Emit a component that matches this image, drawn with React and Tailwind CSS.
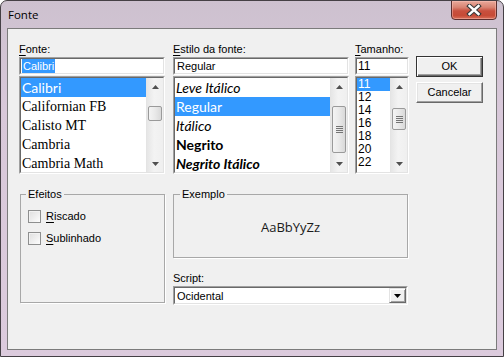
import React from 'react';

const ui = "font-['Liberation_Sans',Arial,sans-serif]";

const fonts = [
  { name: 'Calibri', cls: "font-['Lato',sans-serif] text-[14px]" },
  { name: 'Californian FB', cls: "font-['Liberation_Serif',serif] text-[14px]" },
  { name: 'Calisto MT', cls: "font-['Liberation_Serif',serif] text-[14px]" },
  { name: 'Cambria', cls: "font-['Liberation_Serif',serif] text-[14px]" },
  { name: 'Cambria Math', cls: "font-['Liberation_Serif',serif] text-[14px]" },
];

const styles = [
  { name: 'Leve Itálico', cls: 'italic font-normal' },
  { name: 'Regular', cls: 'font-normal' },
  { name: 'Itálico', cls: 'italic font-normal' },
  { name: 'Negrito', cls: 'font-bold' },
  { name: 'Negrito Itálico', cls: 'italic font-bold' },
];

const sizes = ['11', '12', '14', '16', '18', '20', '22'];

function Up() {
  return (
    <svg width="7" height="4" viewBox="0 0 7 4">
      <path d="M3.5 0 L7 4 L0 4 Z" fill="#505050" />
    </svg>
  );
}

function Down({ color = '#505050' }) {
  return (
    <svg width="7" height="4" viewBox="0 0 7 4">
      <path d="M0 0 L7 0 L3.5 4 Z" fill={color} />
    </svg>
  );
}

function ScrollBar({ thumb, grip }) {
  return (
    <div className="flex w-[17px] shrink-0 flex-col border-l border-[#e4e4e4] bg-[linear-gradient(to_right,#e6e6e6,#f3f3f3_45%,#efefef)]">
      <div className="flex h-[17px] shrink-0 items-center justify-center">
        <Up />
      </div>
      <div className="flex-1">
        <div
          className={`mx-[1px] flex flex-col items-center justify-center gap-[1px] rounded-[2px] border border-[#9a9a9a] bg-[linear-gradient(to_right,#f4f4f4,#e9e9e9_50%,#d9d9d9)] ${thumb}`}
        >
          {grip &&
            [0, 1, 2, 3].map((i) => (
              <div key={i} className="h-[1px] w-[7px] bg-[#747474]" />
            ))}
        </div>
      </div>
      <div className="flex h-[17px] shrink-0 items-center justify-center">
        <Down />
      </div>
    </div>
  );
}

function Sunken({ className, children }) {
  return (
    <div className={`border border-t-[#a0a0a0] border-l-[#a0a0a0] border-r-white border-b-white ${className}`}>
      <div className="h-full border border-t-[#696969] border-l-[#696969] border-r-[#e3e3e3] border-b-[#e3e3e3] bg-white">
        {children}
      </div>
    </div>
  );
}

function Label({ u, rest, className = '' }) {
  return (
    <div className={`h-[16px] leading-[16px] ${className}`}>
      <span className="underline underline-offset-[2px]">{u}</span>
      {rest}
    </div>
  );
}

function CheckRow({ u, rest }) {
  return (
    <div className="flex h-[13px] items-center">
      <div className="h-[13px] w-[13px] border border-[#8e8f8f] bg-[linear-gradient(135deg,#dedede,#fdfdfd)] shadow-[inset_1px_1px_0_#f2f2f2]" />
      <span className="ml-[5px] leading-[13px]">
        <span className="underline underline-offset-[2px]">{u}</span>
        {rest}
      </span>
    </div>
  );
}

export default function App() {
  return (
    <div
      className={`flex h-[357px] w-[504px] flex-col overflow-hidden rounded-t-[7px] border border-[#454045] bg-[linear-gradient(to_bottom,#cdc1cf,#d8c8d9_30%,#dccbdd)] ${ui}`}
    >
      {/* title bar */}
      <div className="flex h-[27px] shrink-0 items-start justify-between">
        <span className="ml-[7px] mt-[7px] font-['Open_Sans',sans-serif] text-[11.5px] leading-[14px] text-black">
          Fonte
        </span>
        <div className="-mt-[1px] mr-[6px] flex h-[20px] w-[46px] items-center justify-center rounded-b-[4px] border border-[#5b2f2f] bg-[linear-gradient(to_bottom,#e9a99b,#d98473_35%,#c8503e_55%,#c64a36_80%,#d8705a)] shadow-[inset_0_0_0_1px_rgba(255,200,190,0.45)]">
          <svg width="16" height="12" viewBox="0 0 16 12">
            <path d="M3.5 2 L12.5 10 M12.5 2 L3.5 10" stroke="#3a3a3a" strokeWidth="4.5" strokeLinecap="square" />
            <path d="M3.5 2 L12.5 10 M12.5 2 L3.5 10" stroke="#ffffff" strokeWidth="2.4" strokeLinecap="square" />
          </svg>
        </div>
      </div>

      {/* client area */}
      <div className="mx-[6px] h-[322px] border border-[#7b7b7b] bg-[#f0f0f0] pl-[11px] pt-[12px] text-[11px] text-black">
        <div className="flex">
          {/* Fonte */}
          <div className="w-[146px]">
            <Label u="F" rest="onte:" />
            <Sunken className="h-[18px]">
              <div className="flex h-full items-center pl-[1px]">
                <span className="bg-[#3399ff] px-[1px] leading-[14px] text-white">Calibri</span>
              </div>
            </Sunken>
            <Sunken className="mt-[1px] h-[98px]">
              <div className="flex h-full overflow-hidden">
                <div className="flex-1">
                  {fonts.map((f, i) => (
                    <div
                      key={f.name}
                      className={`h-[19px] pl-[1px] leading-[19px] whitespace-nowrap ${f.cls} ${i === 0 ? 'bg-[#3399ff] text-white' : 'text-black'}`}
                    >
                      {f.name}
                    </div>
                  ))}
                </div>
                <ScrollBar thumb="mt-[11px] h-[15px]" />
              </div>
            </Sunken>
          </div>

          {/* Estilo */}
          <div className="ml-[8px] w-[176px]">
            <Label u="E" rest="stilo da fonte:" />
            <Sunken className="h-[18px]">
              <div className="flex h-full items-center pl-[2px] leading-[14px]">Regular</div>
            </Sunken>
            <Sunken className="mt-[1px] h-[98px]">
              <div className="flex h-full overflow-hidden">
                <div className="flex-1">
                  {styles.map((s, i) => (
                    <div
                      key={s.name}
                      className={`h-[19px] pl-[1px] font-['Lato',sans-serif] text-[14px] leading-[19px] whitespace-nowrap ${s.cls} ${i === 1 ? 'bg-[#3399ff] text-white' : 'text-black'}`}
                    >
                      {s.name}
                    </div>
                  ))}
                </div>
                <ScrollBar thumb="mt-[11px] h-[47px]" grip />
              </div>
            </Sunken>
          </div>

          {/* Tamanho */}
          <div className="ml-[6px] w-[54px]">
            <Label u="T" rest="amanho:" />
            <Sunken className="h-[18px]">
              <div className="flex h-full items-center pl-[1px] text-[12px] leading-[14px]">11</div>
            </Sunken>
            <Sunken className="mt-[1px] h-[98px]">
              <div className="flex h-full overflow-hidden">
                <div className="flex-1">
                  {sizes.map((s, i) => (
                    <div
                      key={s}
                      className={`h-[13px] pl-[1px] text-[12px] leading-[13px] ${i === 0 ? 'bg-[#3399ff] text-white' : 'text-black'}`}
                    >
                      {s}
                    </div>
                  ))}
                </div>
                <ScrollBar thumb="mt-[13px] h-[22px]" grip />
              </div>
            </Sunken>
          </div>

          {/* buttons */}
          <div className="ml-[7px] flex w-[67px] flex-col pt-[15px]">
            <button className="h-[21px] border border-[#333333] bg-[#f0f0f0] text-[11px] shadow-[inset_1px_1px_0_#ffffff,inset_-1px_-1px_0_#696969,inset_-2px_-2px_0_#a0a0a0]">
              OK
            </button>
            <button className="mt-[5px] h-[21px] border border-t-white border-l-white border-r-[#696969] border-b-[#696969] bg-[#f0f0f0] text-[11px] shadow-[inset_-1px_-1px_0_#a0a0a0,inset_1px_1px_0_#e3e3e3]">
              Cancelar
            </button>
          </div>
        </div>

        {/* bottom */}
        <div className="mt-[14px] flex">
          <fieldset className="ml-[1px] h-[115px] w-[145px] border border-[#a8a8a8] shadow-[1px_1px_0_#ffffff]">
            <legend className="ml-[5px] px-[2px] leading-[13px]">Efeitos</legend>
            <div className="flex flex-col gap-[9px] pl-[7px] pt-[9px]">
              <CheckRow u="R" rest="iscado" />
              <CheckRow u="S" rest="ublinhado" />
            </div>
          </fieldset>

          <div className="ml-[8px] w-[235px]">
            <fieldset className="h-[70px] border border-[#a8a8a8] shadow-[1px_1px_0_#ffffff]">
              <legend className="ml-[6px] px-[2px] leading-[13px]">Exemplo</legend>
              <div className="flex h-[55px] items-center justify-center pb-[1px] font-['Open_Sans',sans-serif] text-[13px] text-[#1a1a1a]">
                AaBbYyZz
              </div>
            </fieldset>
            <div className="mt-[12px] h-[16px] leading-[16px]">Script:</div>
            <Sunken className="h-[19px]">
              <div className="flex h-full items-center justify-between">
                <span className="pl-[2px] leading-[14px]">Ocidental</span>
                <div className="flex h-full w-[17px] items-center justify-center border border-t-[#e3e3e3] border-l-[#e3e3e3] border-r-[#696969] border-b-[#696969] bg-[#f0f0f0] shadow-[inset_1px_1px_0_#ffffff,inset_-1px_-1px_0_#a0a0a0]">
                  <Down color="#000000" />
                </div>
              </div>
            </Sunken>
          </div>
        </div>
      </div>
    </div>
  );
}
